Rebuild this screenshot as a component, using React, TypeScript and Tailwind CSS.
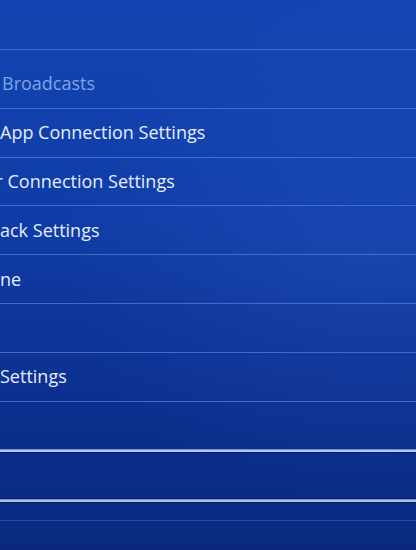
const rows: { text: string; offset: string }[] = [
  { text: 'App Connection Settings', offset: 'ml-[0px]' },
  { text: 'r Connection Settings', offset: 'ml-[-4.5px]' },
  { text: 'ack Settings', offset: 'ml-[0px]' },
  { text: 'ne', offset: 'ml-[0px]' },
  { text: '', offset: 'ml-[0px]' },
  { text: 'Settings', offset: 'ml-[0px]' },
  { text: '', offset: 'ml-[0px]' },
]

function Line() {
  return <div className="h-px bg-[#4f7fda]/75" />
}

export default function App() {
  return (
    <div
      className="relative h-[550px] w-[416px] overflow-hidden bg-[radial-gradient(ellipse_at_90%_45%,rgba(70,120,230,0.18),transparent_60%),linear-gradient(to_bottom,#1345b2_0%,#0f3ca6_40%,#0b2f8e_75%,#0a297e_100%)] text-[18px] text-[#e6edfb]"
      style={{ fontFamily: '"Open Sans", "Noto Sans", sans-serif' }}
    >
      <div className="h-[49px]" />
      <Line />
      <div className="flex h-[57.8px] items-center pt-[10px]">
        <span className="ml-[2px] text-[#7ea7e4]">Broadcasts</span>
      </div>
      {rows.map((r, i) => (
        <div key={i}>
          <Line />
          <div className="flex h-[47.8px] items-center">
            <span className={`${r.offset} whitespace-nowrap`}>{r.text}</span>
          </div>
        </div>
      ))}
      {/* highlighted selection frame */}
      <div className="h-px bg-[#6f8fd8]" />
      <div className="h-[2px] bg-[#b4c8f2]" />
      <div className="h-px bg-[#0a1f5c]" />
      <div className="h-[44.6px]" />
      <div className="h-px bg-[#0a1f5c]" />
      <div className="h-px bg-[#6f8fd8]" />
      <div className="h-[2px] bg-[#a8bde8]" />
      <div className="h-px bg-[#0a1f5c]" />
      <div className="h-[17px]" />
      <div className="h-px bg-[#3a5fb8]/60" />
    </div>
  )
}
